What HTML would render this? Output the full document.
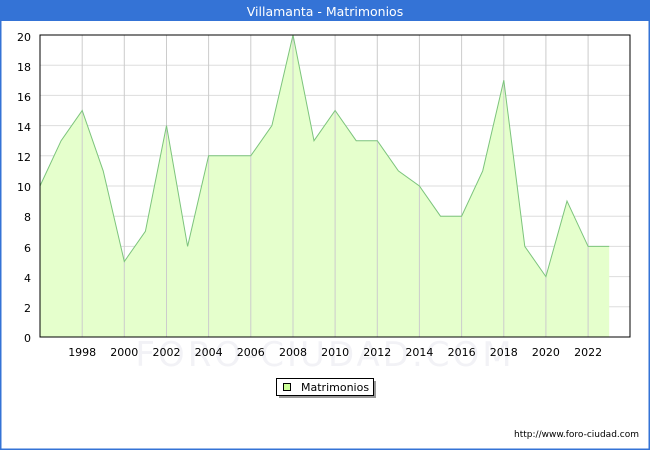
<!DOCTYPE html>
<html><head><meta charset="utf-8"><style>
body{margin:0;width:650px;height:450px;overflow:hidden;background:#fff;font-family:"DejaVu Sans","Liberation Sans",sans-serif}
</style></head><body>
<svg width="650" height="450" xmlns="http://www.w3.org/2000/svg" font-family="DejaVu Sans, Liberation Sans, sans-serif">
<rect x="0.5" y="0.5" width="649" height="449" fill="#fff" stroke="#3473d6" stroke-width="2"/>
<rect x="0" y="0" width="650" height="21" fill="#3473d6"/>
<text x="325" y="16" fill="#fff" font-size="12.5" text-anchor="middle">Villamanta - Matrimonios</text>
<text x="325" y="366" fill="#f2f2f6" font-size="34" text-anchor="middle" letter-spacing="3">FORO-CIUDAD.COM</text>
<g stroke="#ddd" stroke-width="1">
<line x1="40" y1="65.2" x2="630" y2="65.2"/><line x1="40" y1="95.4" x2="630" y2="95.4"/><line x1="40" y1="125.6" x2="630" y2="125.6"/><line x1="40" y1="155.8" x2="630" y2="155.8"/><line x1="40" y1="186" x2="630" y2="186"/><line x1="40" y1="216.2" x2="630" y2="216.2"/><line x1="40" y1="246.4" x2="630" y2="246.4"/><line x1="40" y1="276.6" x2="630" y2="276.6"/><line x1="40" y1="306.8" x2="630" y2="306.8"/>
</g>
<polygon fill="#e5ffcc" stroke="none" points="40,337 40,186 61.1,140.7 82.2,110.5 103.2,170.9 124.3,261.5 145.4,231.3 166.5,125.6 187.6,246.4 208.6,155.8 229.7,155.8 250.8,155.8 271.9,125.6 293,35 314,140.7 335.1,110.5 356.2,140.7 377.3,140.7 398.4,170.9 419.4,186 440.5,216.2 461.6,216.2 482.7,170.9 503.8,80.3 524.8,246.4 545.9,276.6 567,201.1 588.1,246.4 609.2,246.4 609.2,337"/>
<g stroke="#ccc" stroke-width="1">
<line x1="82.2" y1="35" x2="82.2" y2="337"/><line x1="124.3" y1="35" x2="124.3" y2="337"/><line x1="166.5" y1="35" x2="166.5" y2="337"/><line x1="208.6" y1="35" x2="208.6" y2="337"/><line x1="250.8" y1="35" x2="250.8" y2="337"/><line x1="293" y1="35" x2="293" y2="337"/><line x1="335.1" y1="35" x2="335.1" y2="337"/><line x1="377.3" y1="35" x2="377.3" y2="337"/><line x1="419.4" y1="35" x2="419.4" y2="337"/><line x1="461.6" y1="35" x2="461.6" y2="337"/><line x1="503.8" y1="35" x2="503.8" y2="337"/><line x1="545.9" y1="35" x2="545.9" y2="337"/><line x1="588.1" y1="35" x2="588.1" y2="337"/>
</g>
<polyline fill="none" stroke="#7cc47c" stroke-width="1" points="40,186 61.1,140.7 82.2,110.5 103.2,170.9 124.3,261.5 145.4,231.3 166.5,125.6 187.6,246.4 208.6,155.8 229.7,155.8 250.8,155.8 271.9,125.6 293,35 314,140.7 335.1,110.5 356.2,140.7 377.3,140.7 398.4,170.9 419.4,186 440.5,216.2 461.6,216.2 482.7,170.9 503.8,80.3 524.8,246.4 545.9,276.6 567,201.1 588.1,246.4 609.2,246.4"/>
<rect x="40" y="35" width="590" height="302" fill="none" stroke="#000" stroke-width="1"/>
<g font-size="11" fill="#000" text-anchor="end">
<text x="31" y="41">20</text><text x="31" y="71">18</text><text x="31" y="101">16</text><text x="31" y="131">14</text><text x="31" y="161">12</text><text x="31" y="191">10</text><text x="31" y="221">8</text><text x="31" y="252">6</text><text x="31" y="282">4</text><text x="31" y="312">2</text><text x="31" y="342">0</text>
</g>
<g font-size="11" fill="#000" text-anchor="middle">
<text x="82.2" y="356">1998</text><text x="124.3" y="356">2000</text><text x="166.5" y="356">2002</text><text x="208.6" y="356">2004</text><text x="250.8" y="356">2006</text><text x="293" y="356">2008</text><text x="335.1" y="356">2010</text><text x="377.3" y="356">2012</text><text x="419.4" y="356">2014</text><text x="461.6" y="356">2016</text><text x="503.8" y="356">2018</text><text x="545.9" y="356">2020</text><text x="588.1" y="356">2022</text>
</g>
<rect x="279" y="381" width="97" height="17" fill="#999"/>
<rect x="276.5" y="378.5" width="97" height="17" fill="#fff" stroke="#000" stroke-width="1"/>
<rect x="283.5" y="383.5" width="7" height="7" fill="#ccff99" stroke="#000" stroke-width="1"/>
<text x="301" y="391" font-size="11" fill="#000">Matrimonios</text>
<text x="639" y="437" font-size="9" fill="#000" text-anchor="end">http://www.foro-ciudad.com</text>
</svg>
</body></html>
